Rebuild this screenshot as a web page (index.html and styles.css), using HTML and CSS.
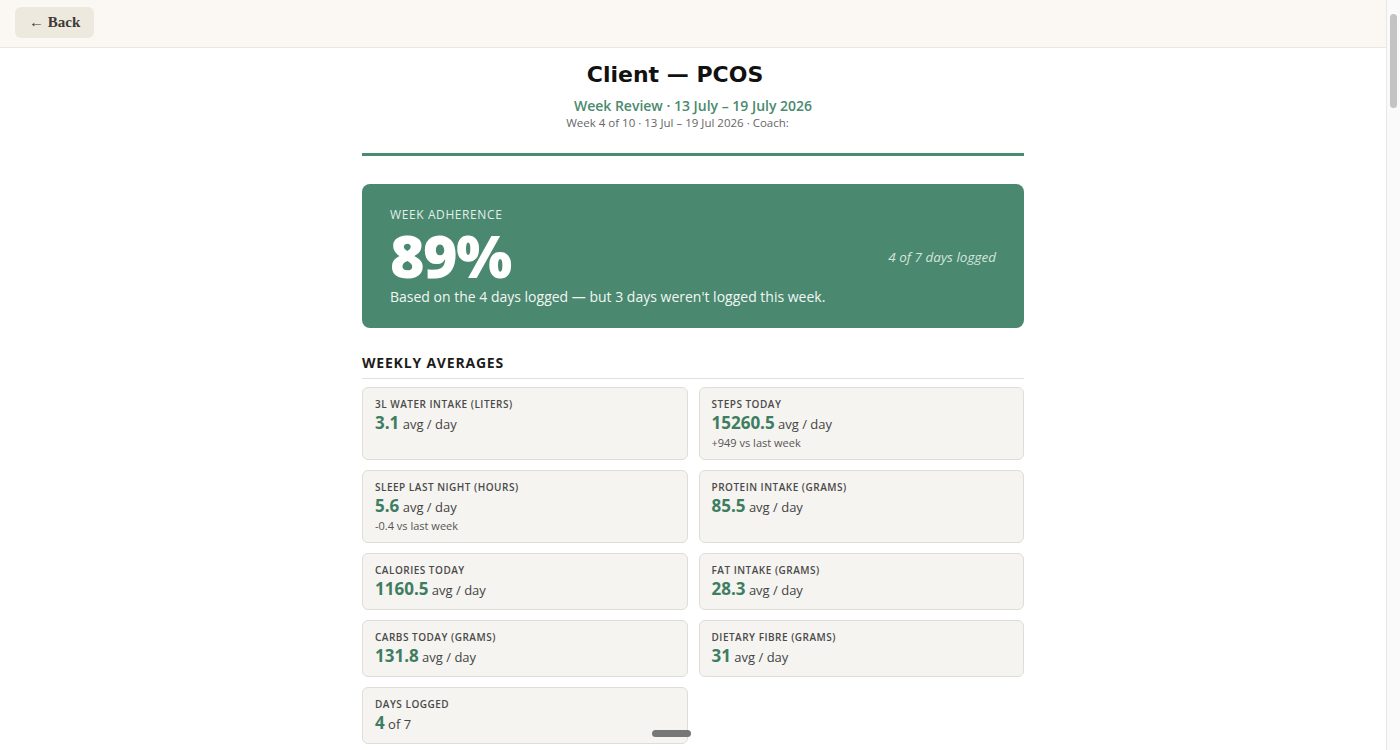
FILE: index.html
```html
<!DOCTYPE html>
<html lang="en">
<head>
    <meta charset="UTF-8">
    <meta name="viewport" content="width=device-width, initial-scale=1.0">
    <title>Week Review</title>
    <link rel="stylesheet" href="styles.css">
</head>
<body>
    <div class="topbar">
        <button class="back">&larr; Back</button>
    </div>
    <div class="page">
        <div class="header">
            <h1>Client — PCOS</h1>
            <div class="subtitle">Week Review · 13 July – 19 July 2026</div>
            <div class="meta">Week 4 of 10 · 13 Jul – 19 Jul 2026 · Coach: <span class="coach"></span></div>
        </div>

        <div class="hero">
            <div class="hero-left">
                <div class="hero-label">WEEK ADHERENCE</div>
                <div class="hero-value">89%</div>
                <div class="hero-note">Based on the 4 days logged — but 3 days weren't logged this week.</div>
            </div>
            <div class="hero-right">4 of 7 days logged</div>
        </div>

        <h2 class="section">WEEKLY AVERAGES</h2>
        <div class="grid">
            <div class="card">
                <div class="label">3L Water Intake (Liters)</div>
                <div class="value"><b>3.1</b> avg / day</div>
            </div>
            <div class="card">
                <div class="label">Steps Today</div>
                <div class="value"><b>15260.5</b> avg / day</div>
                <div class="delta">+949 vs last week</div>
            </div>
            <div class="card">
                <div class="label">Sleep Last Night (Hours)</div>
                <div class="value"><b>5.6</b> avg / day</div>
                <div class="delta">-0.4 vs last week</div>
            </div>
            <div class="card">
                <div class="label">Protein Intake (Grams)</div>
                <div class="value"><b>85.5</b> avg / day</div>
            </div>
            <div class="card">
                <div class="label">Calories Today</div>
                <div class="value"><b>1160.5</b> avg / day</div>
            </div>
            <div class="card">
                <div class="label">Fat Intake (Grams)</div>
                <div class="value"><b>28.3</b> avg / day</div>
            </div>
            <div class="card">
                <div class="label">Carbs Today (Grams)</div>
                <div class="value"><b>131.8</b> avg / day</div>
            </div>
            <div class="card">
                <div class="label">Dietary Fibre (Grams)</div>
                <div class="value"><b>31</b> avg / day</div>
            </div>
            <div class="card">
                <div class="label">Days Logged</div>
                <div class="value"><b>4</b> of 7</div>
            </div>
        </div>
        <div class="spacer"></div>
    </div>
    <div class="handle"></div>
    <div class="scrollbar"><div class="thumb"></div></div>
</body>
</html>
```

FILE: styles.css
```css
* {
    box-sizing: border-box;
}
body {
    margin: 0 14px 0 0;
    background: #fff;
    font-family: "Open Sans", "Noto Sans", sans-serif;
    color: #222;
}
.topbar {
    height: 48px;
    background: #fbf8f3;
    border-bottom: 1px solid #ebe7e0;
    padding: 7px 15px;
}
.back {
    height: 31px;
    padding: 0 14px;
    background: #eee9df;
    border: none;
    border-radius: 6px;
    font-family: "Liberation Serif", serif;
    font-weight: bold;
    font-size: 15px;
    color: #3d3a35;
    cursor: pointer;
}
.page {
    width: 662px;
    margin: 0 auto;
}
.header {
    text-align: center;
    padding-top: 12px;
    padding-bottom: 22px;
    border-bottom: 3px solid #4a8a6e;
}
h1 {
    margin: 0;
    padding-right: 36px;
    font-family: "DejaVu Sans", sans-serif;
    font-size: 22px;
    font-weight: bold;
    color: #111;
    line-height: 30px;
}
.subtitle {
    margin-top: 7px;
    font-size: 14px;
    font-weight: 600;
    color: #4a8a6e;
    line-height: 18px;
}
.meta {
    font-size: 11.5px;
    color: #666;
    line-height: 16px;
}
.coach {
    display: inline-block;
    width: 28px;
}
.hero {
    margin-top: 28px;
    background: #4a8870;
    border-radius: 8px;
    padding: 23px 28px 22px 28px;
    display: flex;
    justify-content: space-between;
    align-items: center;
    color: #fff;
}
.hero-label {
    font-size: 12px;
    letter-spacing: 0.6px;
    color: #e3eee8;
    line-height: 16px;
}
.hero-value {
    font-size: 59px;
    font-weight: 800;
    line-height: 64px;
    letter-spacing: -1.5px;
}
.hero-note {
    font-size: 14px;
    line-height: 19px;
    color: #f2f7f4;
}
.hero-right {
    font-size: 13.5px;
    font-style: italic;
    color: #d6e6dd;
}
.section {
    margin: 26px 0 8px;
    padding-bottom: 6px;
    border-bottom: 1px solid #e2e0dc;
    font-size: 14px;
    font-weight: 700;
    letter-spacing: 0.8px;
    color: #1c1c1c;
    line-height: 18px;
}
.grid {
    display: grid;
    grid-template-columns: 1fr 1fr;
    gap: 10px 11px;
}
.card {
    background: #f5f4f0;
    border: 1px solid #dfddd8;
    border-radius: 6px;
    padding: 9px 12px 8px;
}
.label {
    font-size: 10px;
    font-weight: 600;
    text-transform: uppercase;
    letter-spacing: 0.5px;
    color: #4a4a4a;
    line-height: 14px;
    margin-bottom: 2px;
}
.value {
    font-size: 13px;
    font-weight: 500;
    color: #444;
    line-height: 22px;
}
.value b {
    font-size: 17px;
    font-weight: 700;
    color: #3f7d62;
    line-height: 1;
}
.delta {
    font-size: 11px;
    font-weight: 500;
    color: #555;
    line-height: 16px;
}
.spacer {
    height: 60px;
}
.handle {
    position: fixed;
    left: 652px;
    bottom: 13px;
    width: 39px;
    height: 7px;
    border-radius: 4px;
    background: #777;
}
.scrollbar {
    position: fixed;
    top: 0;
    right: 0;
    width: 14px;
    height: 100vh;
    background: #fafafa;
    border-left: 1px solid #e8e8e8;
    padding: 14px 3px 0 3px;
}
.thumb {
    height: 94px;
    border-radius: 4px;
    background: #c3c3c3;
}
```
